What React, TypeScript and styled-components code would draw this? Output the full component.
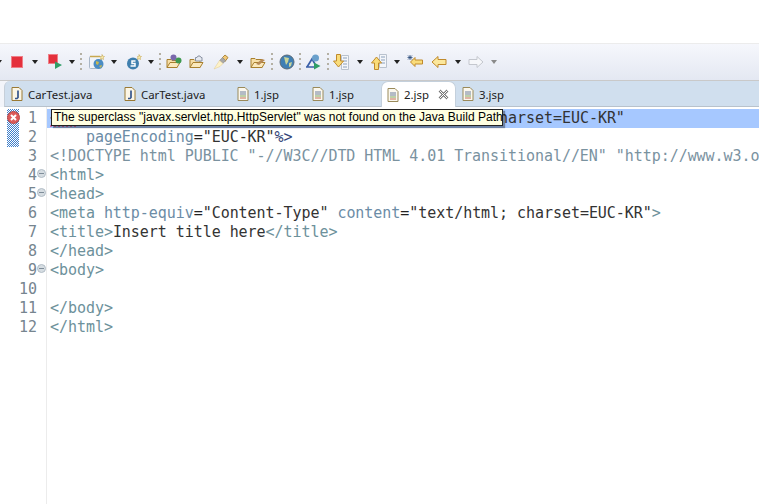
import * as React from "react";
import styled, { createGlobalStyle } from "styled-components";

const GlobalStyle = createGlobalStyle`
  html, body { margin: 0; padding: 0; background: #fff; }
  body { width: 759px; height: 504px; overflow: hidden; font-family: "Liberation Sans", sans-serif; }
`;

const Page = styled.div`
  width: 759px;
  height: 504px;
  display: flex;
  flex-direction: column;
  overflow: hidden;
`;
const TopBlank = styled.div`
  height: 43px;
  background: #fff;
  border-bottom: 1px solid #ececec;
  flex: none;
`;
const Toolbar = styled.div`
  height: 36px;
  flex: none;
  display: flex;
  align-items: center;
  background: linear-gradient(#f6f7fc, #e4e8f2);
  border-bottom: 1px solid #c9c9c9;
`;
const ToolSlot = styled.span<{ $ml: number }>`
  display: flex;
  flex: none;
  margin-left: ${p => p.$ml}px;
`;
const ToolIcon = styled.svg`
  width: 16px;
  height: 16px;
  flex: none;
`;
const Caret = styled.span<{ $light?: boolean }>`
  width: 0;
  height: 0;
  flex: none;
  border-left: 3.5px solid transparent;
  border-right: 3.5px solid transparent;
  border-top: 4px solid ${p => (p.$light ? "#8a8a8a" : "#222")};
`;
const Sep = styled.span`
  width: 2px;
  height: 18px;
  flex: none;
  background: repeating-linear-gradient(#b4b0a4 0 2px, transparent 2px 5px);
`;
const TabStrip = styled.div`
  flex: none;
  background: #f3f5fa;
  padding-left: 4px;
`;
const TabBar = styled.div`
  height: 25px;
  display: flex;
  align-items: flex-end;
  background: #d0dfee;
  border-left: 1px solid #c6cfd9;
  border-bottom: 1px solid #b8c2cc;
  border-radius: 6px 0 0 0;
`;
const Tab = styled.div<{ $width: number; $active?: boolean }>`
  width: ${p => p.$width}px;
  height: 24px;
  box-sizing: border-box;
  display: flex;
  align-items: center;
  gap: 3px;
  padding-left: 4px;
  font-family: "Noto Sans", sans-serif;
  font-size: 11.4px;
  color: #222;
  flex: none;
  ${p =>
    p.$active
      ? `background: #fff; border: 1px solid #c4d0dc; border-bottom: 0; border-radius: 7px 7px 0 0; margin-bottom: -1px; height: 26px; padding-left: 3px; padding-right: 6px;`
      : ``}
`;
const CloseMark = styled.svg`
  width: 11px;
  height: 11px;
  margin-left: auto;
`;
const Editor = styled.div`
  flex: 1;
  display: flex;
  padding-top: 2px;
  background: #fff;
  position: relative;
  min-height: 0;
`;
const MarkerColumn = styled.div`
  width: 19px;
  flex: none;
  position: relative;
`;
const ErrorStripe = styled.div`
  position: absolute;
  left: 7px;
  top: 0;
  width: 12px;
  height: 38px;
  background-image: conic-gradient(#3f7fcb 25%, #fff 0 50%, #3f7fcb 0 75%, #fff 0);
  background-size: 2px 2px;
`;
const ErrorBadge = styled.svg`
  position: absolute;
  left: 7px;
  top: 2px;
  width: 13px;
  height: 13px;
`;
const LineColumn = styled.div`
  width: 27px;
  flex: none;
  border-right: 1px solid #ececec;
  margin-top: -2px;
  padding-top: 2px;
`;
const LineNo = styled.div`
  height: 19px;
  line-height: 19px;
  font-family: "DejaVu Sans Mono", monospace;
  font-size: 15px;
  color: #76858f;
  position: relative;
  text-align: right;
  padding-right: 9px;
`;
const Fold = styled.span`
  position: absolute;
  left: 18px;
  top: 3px;
  width: 9px;
  height: 9px;
  border-radius: 50%;
  background: #d6dde2;
  border: 1px solid #b2bdc6;
  box-sizing: border-box;
  &::after {
    content: "";
    position: absolute;
    left: 1px;
    right: 1px;
    top: 3px;
    height: 1px;
    background: #7f8d99;
  }
`;
const Code = styled.div`
  flex: 1;
  min-width: 0;
  overflow: hidden;
`;
const CodeLine = styled.div<{ $current?: boolean }>`
  height: 19px;
  line-height: 19px;
  padding-left: 3px;
  white-space: pre;
  font-family: "DejaVu Sans Mono", monospace;
  font-size: 15px;
  letter-spacing: -0.05px;
  color: #222;
  background: ${p => (p.$current ? "#a6c8ff" : "transparent")};
`;
const Tag = styled.span`
  color: #6d919b;
`;
const Attr = styled.span`
  color: #6c8ca6;
`;
const Str = styled.span`
  color: #333;
`;
const Doc = styled.span`
  color: #7a929f;
`;
const Directive = styled.span`
  color: #33457a;
`;
const Squiggle = styled.span`
  text-decoration: underline dotted #e0508a;
  text-underline-offset: 3px;
`;
const Tooltip = styled.div`
  position: absolute;
  left: 51px;
  top: 2px;
  width: 452px;
  height: 17px;
  line-height: 15px;
  box-sizing: border-box;
  padding: 0 0 0 2px;
  background: #ffffe1;
  border: 1px solid #222;
  box-shadow: 2px 2px 1px rgba(0, 0, 0, 0.35);
  font-family: "Liberation Sans", sans-serif;
  font-size: 12px;
  letter-spacing: 0.015px;
  color: #000;
  white-space: nowrap;
`;

const STAR = "M13 .5l.8 1.700 1.700.3-1.300 1.200.3 1.800-1.500-.9-1.500.9.3-1.800L11.500 2.500l1.700-.3z";

const JavaIcon = () => (
  <ToolIcon viewBox="0 0 16 16">
    <path d="M3 1.500h7l3 3v10H3z" fill="#fbf6e6" stroke="#9a7a35" />
    <path d="M9 4.500v7l-1 1H6" fill="none" stroke="#34558c" strokeWidth="1.700" />
  </ToolIcon>
);
const JspIcon = () => (
  <ToolIcon viewBox="0 0 16 16">
    <path d="M3 1.500h7l3 3v10H3z" fill="#fbf8ee" stroke="#9a8a5a" />
    <path d="M5 6h6M5 8h6" stroke="#6d7f9c" />
    <path d="M5 10h6" stroke="#7fa860" />
    <path d="M5 12h6" stroke="#c5705a" />
  </ToolIcon>
);
const Stop = () => (
  <ToolIcon viewBox="0 0 16 16">
    <rect x="2.500" y="2.500" width="11" height="11" fill="#e4303c" stroke="#ee7f88" />
  </ToolIcon>
);
const StopRun = () => (
  <ToolIcon viewBox="0 0 16 16">
    <rect x="1.500" y="0.500" width="9" height="9" fill="#e4303c" stroke="#ee7f88" />
    <path d="M8 7.500l7 3.500-7 4z" fill="#2f9e66" />
  </ToolIcon>
);
const GlobeNew = () => (
  <ToolIcon viewBox="0 0 16 16">
    <rect x="0.500" y="2.500" width="12" height="12" rx="1" fill="#f0f3f8" stroke="#a9b7c8" />
    <path d="M1 2.500h10" stroke="#c8a850" strokeWidth="1.500" />
    <circle cx="9.500" cy="10" r="5" fill="#4a8cc4" />
    <path d="M7 7l3 1-1 3-2-1zM10 12l3-1-1 3z" fill="#c8b850" />
    <path d={STAR} fill="#fbeeb0" stroke="#c8a850" strokeWidth="0.600" />
  </ToolIcon>
);
const ServerNew = () => (
  <ToolIcon viewBox="0 0 16 16">
    <circle cx="7" cy="9.500" r="6" fill="#3f7fae" />
    <path d="M9.500 7H6v2.500h3V12H4.500" fill="none" stroke="#fff" strokeWidth="1.500" />
    <path d={STAR} fill="#fbeeb0" stroke="#c8a850" strokeWidth="0.600" />
  </ToolIcon>
);
const FolderPackage = () => (
  <ToolIcon viewBox="0 0 16 16">
    <path d="M1 5.500h4l1 1h5v7H1z" fill="#f7dfa8" stroke="#a9802e" />
    <path d="M1 13.500l3-5h10l-3 5z" fill="#fbe9bd" stroke="#a9802e" />
    <circle cx="7.500" cy="3.500" r="3" fill="#7a68ac" />
    <circle cx="12.500" cy="6.500" r="3" fill="#3f9a50" />
  </ToolIcon>
);
const FolderOpen = () => (
  <ToolIcon viewBox="0 0 16 16">
    <path d="M1 5.500h4l1 1h5v7H1z" fill="#f7dfa8" stroke="#a9802e" />
    <path d="M1 13.500l3-5h10l-3 5z" fill="#fbe9bd" stroke="#a9802e" />
    <path d="M6.500 7V3.500h1.500l1-1.500h2l1 1.500h1V7z" fill="#e6e9f0" stroke="#8a93a3" />
  </ToolIcon>
);
const Brush = () => (
  <ToolIcon viewBox="0 0 16 16">
    <path d="M9.500 3.500l2.500-2.500 3 2.500-3 4z" fill="#f1c877" stroke="#b08a3c" />
    <path d="M6.500 6.500l3-3 3 3-2.500 3z" fill="#a8a8a8" stroke="#808080" strokeWidth="0.500" />
    <path d="M6.500 6.500l3.500 3-3 3-6 2.500z" fill="#fdf2c8" stroke="#e0c88c" strokeWidth="0.500" />
  </ToolIcon>
);
const FolderPen = () => (
  <ToolIcon viewBox="0 0 16 16">
    <path d="M1 4.500h4l1 1h6v8H1z" fill="#f7dfa8" stroke="#a9802e" />
    <path d="M1 13.500l3-5h11l-3 5z" fill="#fbe9bd" stroke="#a9802e" />
    <path d="M6 10l6-5 3 1-6 5z" fill="#b88a58" />
  </ToolIcon>
);
const Globe = () => (
  <ToolIcon viewBox="0 0 16 16">
    <circle cx="8" cy="8" r="7" fill="#3f7fb4" stroke="#5a6a78" />
    <path d="M5 3l5 1-1 4-2 3-1-4zM10 9l3-1-1 4-2 1z" fill="#c8d49a" />
  </ToolIcon>
);
const Debug = () => (
  <ToolIcon viewBox="0 0 16 16">
    <path d="M1 13h8M2 13L7 5l3 5" fill="none" stroke="#3a5fa8" strokeWidth="1.700" />
    <circle cx="10.500" cy="4" r="3.500" fill="#6aa0cc" />
    <path d="M9 8.500l6.500 3.500L9 15.500z" fill="#2f9e66" />
  </ToolIcon>
);
const NextAnno = () => (
  <ToolIcon viewBox="0 0 16 16">
    <path d="M8.500 1.500h7v14h-7z" fill="#f4f6fa" stroke="#b9c2ce" />
    <path d="M10 4h4M10 7h4M10 10h4M10 13h4" stroke="#8aa0bc" />
    <path d="M3.500 .5h4v6.500h3L5.500 13 .5 7h3z" fill="#f9dc7a" stroke="#c08a2c" />
  </ToolIcon>
);
const PrevAnno = () => (
  <ToolIcon viewBox="0 0 16 16">
    <path d="M8.500 .5h7v13h-7z" fill="#f4f6fa" stroke="#b9c2ce" />
    <path d="M10 3h4M10 6h4M10 9h4" stroke="#8aa0bc" />
    <path d="M3.500 15.500V9h-3l5-6 5 6h-3v6.500z" fill="#f9dc7a" stroke="#c08a2c" />
  </ToolIcon>
);
const LastEdit = () => (
  <ToolIcon viewBox="0 0 16 16">
    <path d="M8 3.500L3.500 8 8 12.500V10h7.500V6H8z" fill="#f9dc7a" stroke="#c08a2c" />
    <path d="M3 1v5M.5 3.500h5M1 1.500l4 4M5 1.500l-4 4" stroke="#2a4a7a" strokeWidth="0.800" />
  </ToolIcon>
);
const Back = () => (
  <ToolIcon viewBox="0 0 16 16">
    <path d="M7 2.500L1 8l6 5.500V10.500h8v-5H7z" fill="#fbe79c" stroke="#c08a2c" />
  </ToolIcon>
);
const Forward = () => (
  <ToolIcon viewBox="0 0 16 16">
    <path d="M9 2.500L15 8l-6 5.500V10.500H1v-5h8z" fill="#f6f7fa" stroke="#c4c7ce" />
  </ToolIcon>
);

type ToolItem = { left: number; icon?: React.ComponentType; sep?: boolean; light?: boolean };

// left edge of everything on the toolbar, read from the screenshot
const toolItems: ToolItem[] = [
  { left: -4 },
  { left: 10, icon: Stop },
  { left: 33 },
  { left: 49, icon: StopRun },
  { left: 71 },
  { left: 83, sep: true },
  { left: 92, icon: GlobeNew },
  { left: 114 },
  { left: 130, icon: ServerNew },
  { left: 152 },
  { left: 164, sep: true },
  { left: 171, icon: FolderPackage },
  { left: 194, icon: FolderOpen },
  { left: 218, icon: Brush },
  { left: 242 },
  { left: 256, icon: FolderPen },
  { left: 277, sep: true },
  { left: 285, icon: Globe },
  { left: 305, sep: true },
  { left: 311, icon: Debug },
  { left: 333, sep: true },
  { left: 339, icon: NextAnno },
  { left: 363 },
  { left: 378, icon: PrevAnno },
  { left: 401 },
  { left: 415, icon: LastEdit },
  { left: 439, icon: Back },
  { left: 463 },
  { left: 477, icon: Forward },
  { left: 500, light: true },
];

const itemWidth = (item: ToolItem) => (item.icon ? 16 : item.sep ? 2 : 7);

const App = () => {
  return (
    <Page>
      <GlobalStyle />
      <TopBlank />
      <Toolbar>
        {toolItems.map((item, i) => {
          const prev = toolItems[i - 1];
          const ml = prev ? item.left - prev.left - itemWidth(prev) : item.left;
          const Icon = item.icon;
          return (
            <ToolSlot key={item.left} $ml={ml}>
              {Icon ? <Icon /> : item.sep ? <Sep /> : <Caret $light={item.light} />}
            </ToolSlot>
          );
        })}
      </Toolbar>
      <TabStrip>
        <TabBar>
          <Tab $width={113}><JavaIcon />CarTest.java</Tab>
          <Tab $width={113}><JavaIcon />CarTest.java</Tab>
          <Tab $width={75}><JspIcon />1.jsp</Tab>
          <Tab $width={75}><JspIcon />1.jsp</Tab>
          <Tab $width={75} $active><JspIcon />2.jsp
            <CloseMark viewBox="0 0 11 11">
              <path d="M1.500 1.500l8 8M9.500 1.500l-8 8" stroke="#777" strokeWidth="2.600" />
              <path d="M1.500 1.500l8 8M9.500 1.500l-8 8" stroke="#fff" strokeWidth="1" />
            </CloseMark>
          </Tab>
          <Tab $width={70}><JspIcon />3.jsp</Tab>
        </TabBar>
      </TabStrip>
      <Editor>
        <MarkerColumn>
          <ErrorStripe />
          <ErrorBadge viewBox="0 0 13 13">
            <circle cx="6.500" cy="6.500" r="6" fill="#dc5a5a" stroke="#b84a4a" />
            <path d="M4 4l5 5M9 4l-5 5" stroke="#fff" strokeWidth="2" />
          </ErrorBadge>
        </MarkerColumn>
        <LineColumn>
          {Array.from({ length: 12 }, (_, i) => (
            <LineNo key={i}>
              {i + 1}
              {[3, 4, 8].includes(i) && <Fold />}
            </LineNo>
          ))}
        </LineColumn>
        <Code>
          <CodeLine $current><Squiggle><Directive>{"<%@"}</Directive></Squiggle> <Attr>page</Attr> <Attr>language</Attr>=<Str>"java"</Str> <Attr>contentType</Attr>=<Str>"text/html; charset=EUC-KR"</Str></CodeLine>
          <CodeLine>{"    "}<Attr>pageEncoding</Attr>=<Str>"EUC-KR"</Str><Directive>{"%>"}</Directive></CodeLine>
          <CodeLine><Doc>{'<!DOCTYPE html PUBLIC "-//W3C//DTD HTML 4.01 Transitional//EN" "http://www.w3.org/TR/html4/loose.dtd">'}</Doc></CodeLine>
          <CodeLine><Tag>{"<html>"}</Tag></CodeLine>
          <CodeLine><Tag>{"<head>"}</Tag></CodeLine>
          <CodeLine><Tag>{"<meta "}</Tag><Attr>http-equiv</Attr>=<Str>"Content-Type"</Str> <Attr>content</Attr>=<Str>"text/html; charset=EUC-KR"</Str><Tag>{">"}</Tag></CodeLine>
          <CodeLine><Tag>{"<title>"}</Tag><Str>Insert title here</Str><Tag>{"</title>"}</Tag></CodeLine>
          <CodeLine><Tag>{"</head>"}</Tag></CodeLine>
          <CodeLine><Tag>{"<body>"}</Tag></CodeLine>
          <CodeLine />
          <CodeLine><Tag>{"</body>"}</Tag></CodeLine>
          <CodeLine><Tag>{"</html>"}</Tag></CodeLine>
        </Code>
        <Tooltip>The superclass "javax.servlet.http.HttpServlet" was not found on the Java Build Path</Tooltip>
      </Editor>
    </Page>
  );
};

export default App;
